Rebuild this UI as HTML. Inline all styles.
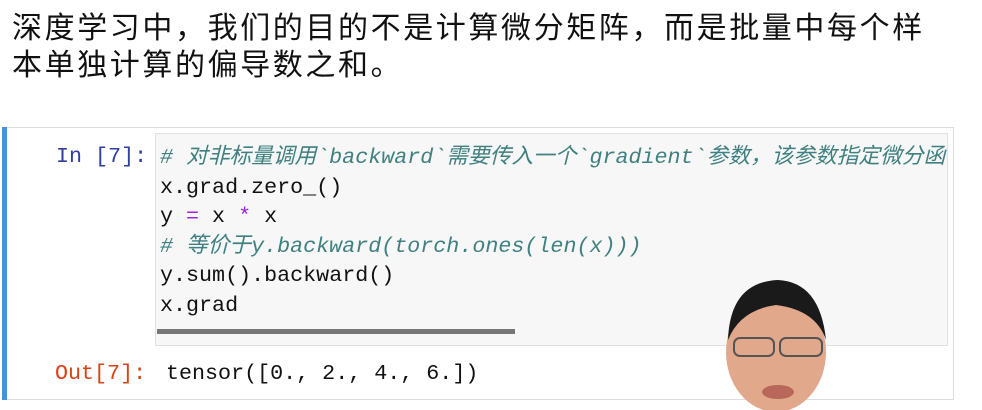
<!DOCTYPE html>
<html><head><meta charset="utf-8"><style>
body{margin:0;width:982px;height:410px;background:#fff;position:relative;overflow:hidden;font-family:"Liberation Sans","Noto Sans CJK SC",sans-serif}
.h{position:absolute;left:12px;top:10px;font-size:30px;line-height:37px;color:#111;letter-spacing:2.6px}
.cell{position:absolute;left:2px;top:127px;width:952px;height:273px;border:1px solid #ddd;border-left:none;box-sizing:border-box}
.bar{position:absolute;left:2px;top:127px;width:5px;height:273px;background:#4b8fd8}
.inp{position:absolute;left:155px;top:133px;width:793px;height:213px;background:#f7f7f7;border:1px solid #e0e0e0;box-sizing:border-box;overflow:hidden}
.code{position:absolute;left:160px;top:143px;width:788px;overflow:hidden;font-family:"Liberation Mono","Noto Sans CJK SC",monospace;font-size:21.7px;line-height:29.5px;color:#111;white-space:pre}
.c{color:#408080;font-style:italic}
.p{color:#a020f0}
.pr{position:absolute;font-family:"Liberation Mono",monospace;font-size:21.7px;white-space:pre}
.sb{position:absolute;left:157px;top:329px;width:358px;height:5px;background:#777}
</style></head><body>
<div class="h">深度学习中，我们的目的不是计算微分矩阵，而是批量中每个样<br>本单独计算的偏导数之和。</div>
<div class="cell"></div><div class="bar"></div>
<div class="inp"></div>
<div class="pr" style="left:56px;top:144px;color:#303f9f">In [7]:</div>
<div class="code"><span class="c"># 对非标量调用`backward`需要传入一个`gradient`参数，该参数指定微分函</span>
x.grad.zero_()
y <span class="p">=</span> x <span class="p">*</span> x
<span class="c"># 等价于y.backward(torch.ones(len(x)))</span>
y.sum().backward()
x.grad</div>
<div class="sb"></div>
<div class="pr" style="left:55px;top:361px;color:#d84315">Out[7]:</div>
<div class="pr" style="left:166px;top:361px;color:#111">tensor([0., 2., 4., 6.])</div>
<svg style="position:absolute;left:720px;top:270px" width="120" height="140">
<ellipse cx="56" cy="82" rx="50" ry="60" fill="#e2a88c"/>
<path d="M8 70 Q10 12 58 10 Q100 12 106 70 Q96 40 56 35 Q20 40 8 70Z" fill="#1a1a1a"/>
<rect x="14" y="68" width="40" height="18" rx="6" fill="none" stroke="#555" stroke-width="2"/>
<rect x="60" y="68" width="42" height="18" rx="6" fill="none" stroke="#555" stroke-width="2"/>
<ellipse cx="58" cy="122" rx="16" ry="7" fill="#b8675a"/>
</svg>
</body></html>
